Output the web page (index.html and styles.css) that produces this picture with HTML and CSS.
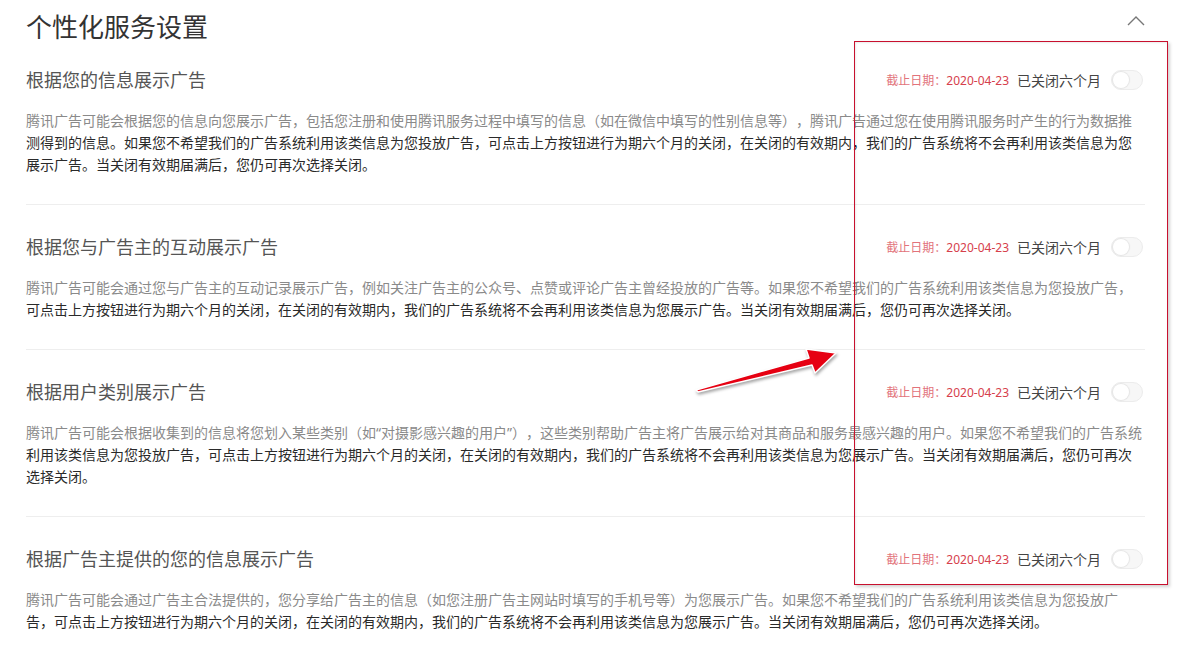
FILE: index.html
```html
<!DOCTYPE html>
<html lang="zh-CN">
<head>
<meta charset="utf-8">
<title>个性化服务设置</title>
<link rel="stylesheet" href="styles.css">
</head>
<body>
<div class="page">
  <header class="header">
    <h1 class="title">个性化服务设置</h1>
    <svg class="chevron" width="18" height="11" viewBox="0 0 18 11"><path d="M1 10 L9 2 L17 10" fill="none" stroke="#777" stroke-width="1.4"/></svg>
  </header>

  <section class="item">
    <div class="item-head">
      <h2 class="item-title">根据您的信息展示广告</h2>
      <div class="status">
        <span class="deadline"><span class="deadline-label">截止日期：</span>2020-04-23</span>
        <span class="state">已关闭六个月</span>
        <span class="switch"><span class="knob"></span></span>
      </div>
    </div>
    <p class="desc">腾讯广告可能会根据您的信息向您展示广告，包括您注册和使用腾讯服务过程中填写的信息（如在微信中填写的性别信息等），腾讯广告通过您在使用腾讯服务时产生的行为数据推测得到的信息。如果您不希望我们的广告系统利用该类信息为您投放广告，可点击上方按钮进行为期六个月的关闭，在关闭的有效期内，我们的广告系统将不会再利用该类信息为您展示广告。当关闭有效期届满后，您仍可再次选择关闭。</p>
  </section>

  <section class="item">
    <div class="item-head">
      <h2 class="item-title">根据您与广告主的互动展示广告</h2>
      <div class="status">
        <span class="deadline"><span class="deadline-label">截止日期：</span>2020-04-23</span>
        <span class="state">已关闭六个月</span>
        <span class="switch"><span class="knob"></span></span>
      </div>
    </div>
    <p class="desc">腾讯广告可能会通过您与广告主的互动记录展示广告，例如关注广告主的公众号、点赞或评论广告主曾经投放的广告等。如果您不希望我们的广告系统利用该类信息为您投放广告，可点击上方按钮进行为期六个月的关闭，在关闭的有效期内，我们的广告系统将不会再利用该类信息为您展示广告。当关闭有效期届满后，您仍可再次选择关闭。</p>
  </section>

  <section class="item">
    <div class="item-head">
      <h2 class="item-title">根据用户类别展示广告</h2>
      <div class="status">
        <span class="deadline"><span class="deadline-label">截止日期：</span>2020-04-23</span>
        <span class="state">已关闭六个月</span>
        <span class="switch"><span class="knob"></span></span>
      </div>
    </div>
    <p class="desc">腾讯广告可能会根据收集到的信息将您划入某些类别（如“对摄影感兴趣的用户”），这些类别帮助广告主将广告展示给对其商品和服务最感兴趣的用户。如果您不希望我们的广告系统利用该类信息为您投放广告，可点击上方按钮进行为期六个月的关闭，在关闭的有效期内，我们的广告系统将不会再利用该类信息为您展示广告。当关闭有效期届满后，您仍可再次选择关闭。</p>
  </section>

  <section class="item">
    <div class="item-head">
      <h2 class="item-title">根据广告主提供的您的信息展示广告</h2>
      <div class="status">
        <span class="deadline"><span class="deadline-label">截止日期：</span>2020-04-23</span>
        <span class="state">已关闭六个月</span>
        <span class="switch"><span class="knob"></span></span>
      </div>
    </div>
    <p class="desc">腾讯广告可能会通过广告主合法提供的，您分享给广告主的信息（如您注册广告主网站时填写的手机号等）为您展示广告。如果您不希望我们的广告系统利用该类信息为您投放广告，可点击上方按钮进行为期六个月的关闭，在关闭的有效期内，我们的广告系统将不会再利用该类信息为您展示广告。当关闭有效期届满后，您仍可再次选择关闭。</p>
  </section>

  <div class="highlight-box"></div>
  <svg class="arrow" width="160" height="60" viewBox="0 0 160 60">
    <polygon points="6,50 119,18 116,9 146,13 125,33 122,25 8,52" fill="#e60012" stroke="#fff" stroke-width="1.5" stroke-linejoin="round"/>
  </svg>
</div>
</body>
</html>
```

FILE: styles.css
```css
html, body {
  margin: 0;
  padding: 0;
  background: #fff;
  overflow: hidden;
}

body {
  font-family: "Noto Sans", "Noto Sans CJK SC", sans-serif;
  color: #333;
}

.page {
  position: relative;
  width: 1119px;
  padding: 0 38px 0 26px;
  height: 647px;
}

.header {
  display: flex;
  justify-content: space-between;
  align-items: center;
  padding-top: 10px;
  height: 34px;
}

.title {
  margin: 0;
  font-size: 26px;
  line-height: 34px;
  font-weight: 400;
  color: #333;
}

.chevron {
  display: block;
  margin-top: -14px;
}

.item {
  padding: 28px 0 28px;
  border-top: 1px solid #eeeeee;
}

.item:first-of-type {
  border-top: none;
  padding-top: 22px;
}

.item-head {
  display: flex;
  justify-content: space-between;
  align-items: center;
  height: 28px;
}

.item-title {
  margin: 0;
  font-size: 18px;
  line-height: 28px;
  font-weight: 400;
  color: #555;
}

.status {
  display: flex;
  align-items: center;
  margin-right: 2px;
}

.deadline {
  font-size: 12px;
  color: #d6404c;
  margin-right: 8px;
}

.deadline-label {
  color: #e2737b;
}

.state {
  font-size: 14px;
  color: #444;
  margin-right: 10px;
}

.switch {
  display: flex;
  align-items: center;
  box-sizing: border-box;
  width: 32px;
  height: 20px;
  border: 1px solid #ececec;
  border-radius: 10px;
  background: #f7f7f7;
  padding: 0 1px;
}

.knob {
  width: 16px;
  height: 16px;
  border-radius: 50%;
  background: #fff;
  box-shadow: 0 0 1px 1px #e4e4e4;
}

.desc {
  margin: 16px 0 0;
  font-size: 14px;
  line-height: 22px;
  color: #2a2a2a;
  text-spacing-trim: space-all;
}

.desc::first-line {
  color: #8a8a8a;
}

.highlight-box {
  position: absolute;
  left: 854px;
  top: 41px;
  width: 312px;
  height: 542px;
  border: 1.5px solid #c8102e;
  box-shadow: 2px 2px 3px rgba(0, 0, 0, 0.18), inset 1px 1px 2px rgba(0, 0, 0, 0.08);
  pointer-events: none;
}

.arrow {
  position: absolute;
  left: 690px;
  top: 340px;
  filter: drop-shadow(1px 2px 1.5px rgba(0, 0, 0, 0.35));
}
```
